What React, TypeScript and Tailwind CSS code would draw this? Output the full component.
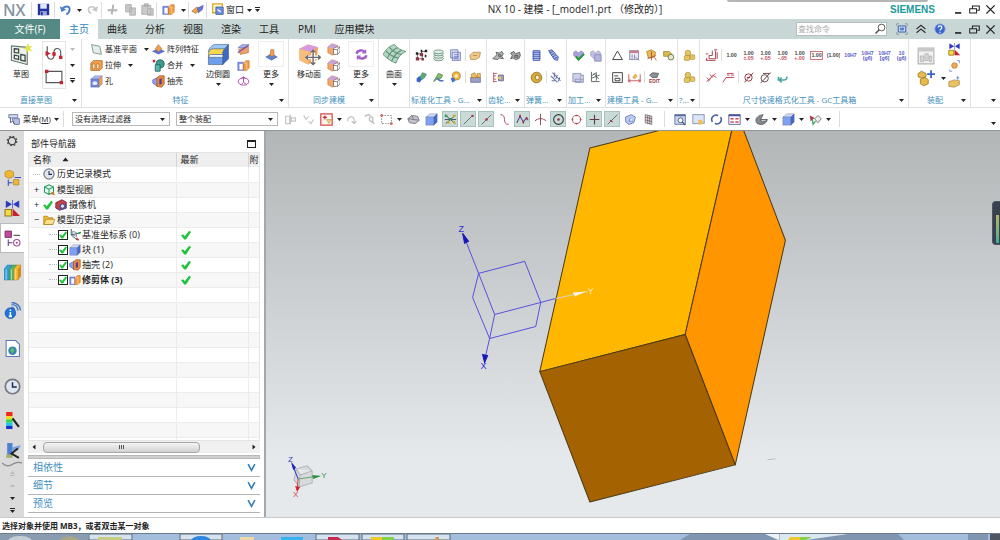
import type { ReactNode } from 'react'
import clsx from 'clsx'

const FONT = "font-['Open_Sans','Noto_Sans_CJK_SC',sans-serif]"

interface CubeProps {
  top: string
  left: string
  right: string
}

function Cube({ top, left, right }: CubeProps) {
  return (
    <g stroke="#555a78" strokeWidth="0.4">
      <path d="M1 5 L6 1 H15 L11 5 Z" fill={top} />
      <path d="M1 5 H11 V15 H1 Z" fill={left} />
      <path d="M11 5 L15 1 V11 L11 15 Z" fill={right} />
    </g>
  )
}

const blueCube = <Cube top="#c9dbfc" left="#7fa0f0" right="#4468cc" />

const heart = (fill: string) => (
  <path d="M8 14 L2 8 V4 L5 2 L8 5 L11 2 L14 4 V8 Z" fill={fill} stroke="#6b6f80" strokeWidth="0.5" />
)

const gold = (
  <g fill="#e6c65c" stroke="#94742a" strokeWidth="0.6">
    <circle cx="6" cy="5" r="3.5" />
    <rect x="1.5" y="8" width="7" height="6" rx="1.5" />
    <rect x="9" y="7" width="5.5" height="6" rx="1.5" />
  </g>
)

const faceCube = (
  <g>
    <path d="M1 5 L6 1 L13 3 L12 12 L7 15 L1 12 Z" fill="#f5a768" stroke="#a8643c" strokeWidth="0.6" />
    <path d="M1 5 L6 1 L13 3 L8 7 Z" fill="#cba4dd" />
    <path d="M8 7 L11 5 H16 V11 L13 14 H8 Z" fill="#fff" stroke="#555" strokeWidth="0.8" />
    <path d="M8 8 H13 V14 M13 8 L16 5" fill="none" stroke="#555" strokeWidth="0.8" />
  </g>
)

const dim = (top: string, bottom?: string, color = '#444') => (
  <g fontFamily="Liberation Sans, sans-serif" fontWeight="700" textAnchor="middle" fill={color}>
    <text x="8" y={bottom ? 7 : 10} fontSize="6.5">
      {top}
    </text>
    {bottom && (
      <text x="8" y="14" fontSize="6.5" fill={color === '#444' ? '#c05060' : color}>
        {bottom}
      </text>
    )}
  </g>
)

const clock = (
  <g>
    <circle cx="8" cy="8" r="6.8" fill="#dfe6f0" stroke="#74797f" strokeWidth="1.6" />
    <path d="M8 4 V8.5 H12" fill="none" stroke="#1b2a48" strokeWidth="1.4" />
  </g>
)

const bars = (
  <g>
    <path d="M1 4 H8 V14 H1 Z" fill="#7b8df0" stroke="#4a50a8" strokeWidth="0.6" />
    <path d="M8 5 L11 2 H15 V11 L12 14 H8 Z" fill="#f59a3c" stroke="#c0601c" strokeWidth="0.6" />
    <path d="M3 6 H7 V13 H3 Z" fill="#fff" />
    <path d="M8 5 H12 V14" fill="none" stroke="#fbd0a0" />
  </g>
)

const icons: Record<string, ReactNode> = {
  save: (
    <g>
      <path d="M1 1 H15 V15 H1 Z" fill="#24349a" />
      <path d="M4 1 H12 V7 H4 Z" fill="#dfe8ff" />
      <path d="M4 10 H12 V15 H4 Z" fill="#9aa8dd" />
      <path d="M5 11 H7 V15 H5 Z" fill="#24349a" />
    </g>
  ),
  undo: (
    <g>
      <path d="M1 4 L3 11 L9 8 Z" fill="#4c7fc6" />
      <path d="M4 8 C6 3 14 3 13 8 C13 11 11 13 9 14" fill="none" stroke="#4c7fc6" strokeWidth="2.4" />
    </g>
  ),
  redo: (
    <g>
      <path d="M15 4 L13 11 L7 8 Z" fill="#c4c8cb" />
      <path d="M12 8 C10 3 3 4 3 8 C3 11 5 12 6 13" fill="none" stroke="#c4c8cb" strokeWidth="2" />
    </g>
  ),
  cut: <path d="M9 2 L7 14 M2 9 H14" fill="none" stroke="#b6b3ae" strokeWidth="2.4" />,
  copy: <path d="M2 2 H9 V11 H2 Z M7 6 H14 V15 H7 Z" fill="#c9c9c9" stroke="#aaa" />,
  paste: <path d="M1 3 H12 V14 H1 Z M4 1 H9 V4 H4 Z M8 7 H15 V15 H8 Z" fill="#c9c9c9" stroke="#aaa" />,
  bars,
  hand: (
    <g>
      <path d="M1 10 L7 5 L11 8 L6 13 Z" fill="#f0a850" stroke="#935c20" strokeWidth="0.7" />
      <path d="M8 6 L15 3 L14 8 L9 12 Z" fill="#6877d4" stroke="#3c4694" strokeWidth="0.7" />
    </g>
  ),
  windowMenu: (
    <g>
      <path d="M2 1 H14 V12 H2 Z" fill="#fff5c8" stroke="#d9aa2a" strokeWidth="1.6" />
      <path d="M6 5 H15 V14 H6 Z" fill="#6f8fdd" stroke="#3858a8" />
      <path d="M8 8 L12 11" stroke="#fff" strokeWidth="1.5" />
    </g>
  ),
  sketch: (
    <g>
      <path d="M1 2 L12 3 V15 L1 12 Z" fill="#edf2ee" stroke="#6a7f75" strokeWidth="0.8" />
      <path
        d="M3 4 L6 4.2 V7 L3 6.6 Z M3 8.5 L6 9 V11.4 L3 10.8 Z M7.5 8 L10.5 8.6 V12.6 L7.5 12 Z"
        fill="none"
        stroke="#404b46"
        strokeWidth="0.9"
      />
      <path d="M12.5 0 L13.3 2.2 L15.8 2 L14 3.7 L15.5 6 L13 5 L11.5 7 L11.3 4.6 L9 4 L11.3 2.8 Z" fill="#dfe84c" />
    </g>
  ),
  spline: (
    <g>
      <path d="M2 1 V8 C2 14 8 14 8 9 V6 C8 2 14 2 14 7 V12" fill="none" stroke="#555" />
      <path d="M1 6 L4 7.5 L1 9 Z M7 7 H9 V9 H7 Z M13 10 H15 V12 H13 Z" fill="#c9202f" stroke="#c9202f" />
    </g>
  ),
  rect: (
    <g>
      <path d="M1 3 H15 V13 H1 Z" fill="none" stroke="#555" />
      <path d="M0.5 2 H2.5 V4 H0.500 Z M13.5 12 H15.5 V14 H13.5 Z" fill="#c9202f" stroke="#c9202f" />
    </g>
  ),
  plane: <path d="M2 2 L12 4 L14 14 L4 12 Z" fill="#e3efe8" stroke="#6e8a7f" />,
  extrude: (
    <g>
      <path d="M1 5 L4 2 H15 V11 L12 14 H1 Z" fill="#f2a04c" stroke="#b0702c" />
      <path d="M3 6 H6 V12 H3 Z M8 6 H11 V12 H8 Z" fill="#fbdcb4" stroke="#99602c" strokeWidth="0.6" />
    </g>
  ),
  hole: (
    <g>
      <Cube top="#a9b8f4" left="#6d84e0" right="#f2a04c" />
      <ellipse cx="6" cy="10" rx="3" ry="2.4" fill="#e8eeff" />
    </g>
  ),
  pattern: (
    <g>
      <path d="M0 10 L8 6 L16 10 L8 14 Z" fill="#5b72d4" />
      <path d="M4 7 L8 2 L12 7 L8 11 Z" fill="#f2a04c" stroke="#99602c" strokeWidth="0.7" />
    </g>
  ),
  unite: (
    <g>
      <circle cx="10" cy="6" r="5" fill="#3f9c92" stroke="#1d5e58" />
      <path d="M4 7 H10 V15 H4 Z" fill="#56b7ab" stroke="#1d5e58" />
      <path d="M1 1 H4 V4 H1 Z" fill="#c9202f" />
    </g>
  ),
  shell: (
    <g>
      <path d="M1 6 L7 3 V14 L1 10 Z" fill="#8ea2ee" stroke="#4a50a8" strokeWidth="0.8" />
      <path d="M6 4 L9 1 H15 V11 L12 15 L6 14 Z" fill="#e98b43" stroke="#8c4a1c" strokeWidth="0.8" />
      <path d="M9 5 L12 4 V11 L9 12 Z" fill="#5d3c8a" />
    </g>
  ),
  blend: (
    <g stroke="#3d5577" strokeWidth="0.4">
      <path d="M1 6 C1 4 3 2 5 1 H15 L11 5 H5 C3 5 2 6 2 7 Z" fill="#9cc8f6" />
      <path d="M1 7 C2 4 4 4 5 4 H12 L11 8 H4 L3 10 H1 Z" fill="#f7d84e" />
      <path d="M1 10 H11 V15 H1 Z" fill="#6f9fec" />
      <path d="M11 6 L15 1 V11 L11 15 Z" fill="#3d68c4" />
      <path d="M2 8 H11 V10 H1 Z" fill="#eef4ff" />
    </g>
  ),
  trim: (
    <g>
      <path d="M1 6 L6 2 H15 L11 6 Z" fill="#a7b2f0" stroke="#4a50a8" strokeWidth="0.6" />
      <path d="M2 8 L14 4 V12 L4 14 Z" fill="#f0a070" stroke="#935c20" strokeWidth="0.6" />
      <path d="M1 12 L14 3" stroke="#7c4ba6" strokeWidth="1.4" />
    </g>
  ),
  ring: (
    <g fill="none" stroke="#b54fae" strokeWidth="1.2">
      <ellipse cx="8" cy="8" rx="6.5" ry="4.5" />
      <path d="M8 2 V9 L5 12 M8 9 L12 12 M5 5 L8 2 L11 5" />
    </g>
  ),
  moreFeature: (
    <g>
      <path d="M1 11 L8 7 L15 11 L8 15 Z" fill="#5b82d8" stroke="#34509a" strokeWidth="0.6" />
      <path d="M7 2 H11 V10 H6 Z" fill="#f2a04c" stroke="#99602c" strokeWidth="0.6" />
    </g>
  ),
  moveFace: (
    <g>
      <path d="M1 4 L7 1 L14 3 L13 12 L7 15 L1 12 Z" fill="#f2a25c" />
      <path d="M1 4 L7 1 L14 3 L8 6 Z" fill="#d49be0" />
      <path d="M1 4 L8 6 L7 15 L1 12 Z" fill="#f7bd7c" />
      <path d="M10.5 5 V15 M5.5 10 H15.5" stroke="#fff" strokeWidth="2.6" />
      <path
        d="M10.5 5 V15 M5.5 10 H15.5 M9 6.5 L10.5 5 L12 6.5 M9 13.5 L10.5 15 L12 13.5 M7 8.5 L5.5 10 L7 11.5 M14 8.5 L15.5 10 L14 11.5"
        fill="none"
        stroke="#6a6a72"
      />
    </g>
  ),
  face: faceCube,
  moreSync: (
    <g fill="none" stroke="#a35bc8" strokeWidth="3">
      <path d="M2 7 C3 2 10 2 12 5" />
      <path d="M14 9 C13 14 6 14 4 11" />
      <path d="M13 2 V6 H9 M3 14 V10 H7" strokeWidth="1.5" />
    </g>
  ),
  surface: (
    <g>
      <path
        d="M0 8 C3 3 5 2 8 1 C10 4 13 5 16 6 C13 7 11 9 9 14 C6 13 3 11 0 8 Z"
        fill="#b3d6c1"
        stroke="#5d8f78"
        strokeWidth="0.6"
      />
      <path
        d="M2 5.5 C5 9 8 10 11 10.500 M4.500 3 C7 6 10 7.5 13 8 M3 10.500 C5 6.500 8 4 10 3.300 M6 12.500 C8 8 10 6 13 5"
        fill="none"
        stroke="#5d8f78"
        strokeWidth="0.7"
      />
    </g>
  ),
  nodes: (
    <g>
      <path d="M3 12 V6 H8 V3 H13 M3 12 H9 V8" fill="none" stroke="#555" />
      <path d="M1 10 H5 V14 H1 Z M6 5 H10 V9 H6 Z M8 11 H11 V14 H8 Z" fill="#8e3340" />
      <path d="M1 4 H4 V7 H1 Z M7 1 H9 V4 H7 Z M12 1 H15 V4 H12 Z M12 7 H14 V10 H12 Z" fill="#222" />
    </g>
  ),
  stack: (
    <g fill="#dfece3" stroke="#58806c" strokeWidth="0.9">
      <ellipse cx="8" cy="12" rx="6" ry="2.4" />
      <ellipse cx="8" cy="9" rx="6" ry="2.4" />
      <ellipse cx="8" cy="6" rx="6" ry="2.4" />
      <ellipse cx="8" cy="3.5" rx="6" ry="2.4" />
    </g>
  ),
  sheets: (
    <path d="M2 1 H11 V11 H2 Z M4 4 H14 V14 H4 Z M6 7 H12 M6 9.5 H12 M6 12 H12" fill="#dfe4fa" stroke="#6873b0" />
  ),
  plate: <path d="M1 8 L5 4 H14 L13 10 L8 13 H2 Z M5 8 H10" fill="#eec98c" stroke="#a67735" strokeWidth="0.8" />,
  screwBlue: (
    <g>
      <path d="M2 9 L6 6 L9 9 L6 14 L2 13 Z" fill="#3d62d0" />
      <path d="M6 8 L9 2 L14 4 L12 8 L8 11 Z" fill="#58b06c" stroke="#286a8c" strokeWidth="0.7" />
    </g>
  ),
  screwGreen: (
    <g>
      <path d="M2 13 L8 3 L13 5 L11 9 L7 9 Z" fill="#89c06c" stroke="#4c7c40" />
      <path d="M6 9 L10 12 L14 12" stroke="#496cc8" strokeWidth="2" fill="none" />
    </g>
  ),
  screwGold: (
    <g>
      <circle cx="9" cy="6" r="5" fill="#f0b640" stroke="#98702a" strokeWidth="0.8" />
      <circle cx="9" cy="6" r="2" fill="#fff3d0" />
      <path d="M2 9 L6 8 L8 12 L4 14 Z" fill="#3d72d0" />
    </g>
  ),
  crate: (
    <g>
      <path d="M2 8 H14 V14 H2 Z" fill="#9ea0c8" stroke="#5c5e88" strokeWidth="0.8" />
      <path d="M3 4 L7 2 L10 8 H3 Z M10 3 H14 V8 H10 Z" fill="#eebd5c" stroke="#98702a" strokeWidth="0.7" />
    </g>
  ),
  gearA: (
    <path
      d="M1 12 L6 7 L5 4 L9 5 L12 3 L14 6 L12 9 L14 12 L9 11 L7 13 Z M8 7 H11 V9 H8 Z"
      fill="#b6b8ba"
      stroke="#4e5254"
    />
  ),
  gearB: (
    <path
      d="M2 5 L6 3 L8 6 L13 4 L14 8 L12 12 L8 13 L5 11 L2 12 L4 8 Z M7 8 H11 V10 H7 Z"
      fill="#a6a8aa"
      stroke="#4e5254"
    />
  ),
  rack: (
    <g>
      <path d="M2 2 V14 M2 3 H6 M2 6 H5 M2 10 H5 M2 13 H6" stroke="#a84850" fill="none" />
      <path d="M8 5 H14 V12 H8 Z" fill="#aaa4c0" stroke="#5c5e88" />
      <path d="M7 7 H11 V10 H7 Z" fill="#e6c05e" />
    </g>
  ),
  springA: (
    <path
      d="M4 2 H12 V14 H4 Z M3 4 H13 M3 6.5 H13 M3 9 H13 M3 11.5 H13"
      fill="#bccaf4"
      stroke="#4a60b4"
      strokeWidth="1.2"
    />
  ),
  springB: (
    <path d="M2 2 L6 1 L14 10 L13 14 L9 13 Z M3 5 L7 3 M5 8 L9 5 M7 10 L11 7 M9 12 L13 10" fill="#9fb0ec" stroke="#3c50a4" />
  ),
  disc: (
    <g>
      <ellipse cx="8" cy="8" rx="6.5" ry="6.5" fill="#d7ad3a" stroke="#8c6d20" />
      <ellipse cx="9" cy="8" rx="2.5" ry="3" fill="#fff1c4" stroke="#8c6d20" />
    </g>
  ),
  springC: (
    <path
      d="M3 2 L13 12 M1 6 L9 14 M6 2 L5 8 M9 5 L7 10 M12 8 L10 13 M2 12 H6"
      fill="none"
      stroke="#6a74a4"
      strokeWidth="1.3"
    />
  ),
  heartCheck: (
    <g>
      {heart('#a69fe0')}
      <path d="M5 9 L8 13 L15 6" fill="none" stroke="#1e9a34" strokeWidth="2.4" />
    </g>
  ),
  heartDoc: (
    <g>
      {heart('#c3bfe8')}
      <path d="M7 7 H15 V15 H7 Z" fill="#b4b4e0" stroke="#7a7aac" strokeWidth="0.8" />
    </g>
  ),
  panelDoc: (
    <path d="M1 3 H11 V13 H1 Z M4 10 H14 V14 H4 Z M11 5 H14 V10" fill="#cdd0e8" stroke="#8286ac" strokeWidth="0.9" />
  ),
  axes: (
    <path
      d="M3 1 V13 H13 M3 6 L9 2 M9 2 V12 M3 9 L13 5 M6 3 L12 10"
      fill="none"
      stroke="#55605c"
      strokeWidth="1.1"
    />
  ),
  triangle: <path d="M8 2.5 L14 13 H2 Z" fill="none" stroke="#444" strokeWidth="1.2" />,
  listRed: (
    <g>
      <path d="M2 2 H13 V13 H2 Z" fill="#e9e9f6" stroke="#7b7ba0" />
      <path d="M2 2 H13 V5 H2 Z" fill="#c98093" />
      <path d="M5 7 V12 M8 7 V12 M9 10 L14 14" stroke="#7b7ba0" />
    </g>
  ),
  goldAxes: (
    <g>
      <path d="M2 3 L8 1 L13 4 L12 10 L4 11 Z" fill="#e9bb4c" stroke="#9d762c" strokeWidth="0.8" />
      <path d="M3 12 L13 8 M8 3 V14 M12 11 L14 14" stroke="#b2443c" />
    </g>
  ),
  goldGear: (
    <g>
      <path d="M2 3 H9 L12 6 L9 9 H2 Z" fill="#d6bc4c" stroke="#8c742c" strokeWidth="0.8" />
      <circle cx="11" cy="10" r="3.5" fill="#e6e6cc" stroke="#5e6e3c" />
    </g>
  ),
  frame: <path d="M2 2 H14 V14 H2 Z M5 9 H11 V12 H5 Z M4 6 H9" fill="none" stroke="#444" strokeWidth="1.2" />,
  measure: (
    <g>
      <path
        d="M1 4 V14 M15 4 V14 M1 12 H15 M3 10 L1 12 L3 14 M13 10 L15 12 L13 14"
        fill="none"
        stroke="#c24040"
      />
      <path d="M5 8 L9 3 L12 6 L8 10 Z" fill="#e7b25a" />
    </g>
  ),
  edit: (
    <g>
      <path d="M2 5 L6 2 L13 3 L11 8 L5 8 Z" fill="#8a9296" stroke="#3c4244" strokeWidth="0.8" />
      <text
        x="8"
        y="15"
        fontSize="6"
        fontWeight="700"
        textAnchor="middle"
        fill="#a03c3c"
        fontFamily="Liberation Sans, sans-serif"
      >
        EDIT
      </text>
    </g>
  ),
  gold,
  dimBox: (
    <path
      d="M2 11 V14 M13 2 V12 H5 M5 12 V8 H9 V2 M1 6 H4 M11 1 H15 M1 14 H13 M15 4 V12"
      fill="none"
      stroke="#a84450"
      strokeWidth="1.2"
    />
  ),
  d1: dim('1.00'),
  d2: dim('1.00', '±.05'),
  d3: dim('1.00', '+.05'),
  d4: dim('1.00', '-.05'),
  d5: dim('1.00', '+.00'),
  d6: (
    <g>
      <path d="M0.5 3 H15.5 V13 H0.5 Z" fill="none" stroke="#c04854" />
      {dim('1.00')}
    </g>
  ),
  d7: dim('(1.00)'),
  d8: dim('10H7', undefined, '#5a58c8'),
  d9: dim('10H7', '(g6)', '#5a58c8'),
  d10: dim('10H7', '[g6]', '#5a58c8'),
  d11: dim('10', '(g6)', '#5a58c8'),
  slant: (
    <path
      d="M2 13 L13 3 M2 8 L5 11 M6 4 L9 8 M9 5 L14 8 M4 13 L7 9"
      fill="none"
      stroke="#c04c58"
      strokeWidth="1.2"
    />
  ),
  leader: (
    <path d="M1 14 L5 8 H15 M6 5 H9 M11 5 H15 M6 3 H14" fill="none" stroke="#c04c58" strokeWidth="1.2" />
  ),
  dia1: (
    <g fill="none" stroke="#9c3a44" strokeWidth="1.2">
      <circle cx="8" cy="8" r="4.5" />
      <path d="M3 14 L14 2 M6 8 H10" />
    </g>
  ),
  dia2: (
    <g fill="none" stroke="#6a4a4e" strokeWidth="1.2">
      <circle cx="7" cy="9" r="4.5" />
      <path d="M2 15 L14 2 M5 3 H14" />
    </g>
  ),
  swirl: <path d="M3 7 V11 H10 C13 11 14 9 13 7 M7 8 L4 11 L7 14" fill="none" stroke="#4aa4a4" strokeWidth="2" />,
  assembly: (
    <g>
      <path d="M1 1 H15 V15 H1 Z" fill="#f2f2f2" stroke="#b2b2b2" />
      <path d="M1 1 H15 V4 H1 Z" fill="#c8c8c8" />
      <path
        d="M3 8 H6 V13 H3 Z M7 6 H10 V12 H7 Z M11 8 H13 V13 H11 Z"
        fill="#d6d6d6"
        stroke="#aaa"
        strokeWidth="0.6"
      />
    </g>
  ),
  addPart: (
    <g>
      <path
        d="M1 4 L4 2 L8 4 V7 L4 8 L1 7 Z M3 9 L7 7.5 L10 9.5 V13 L6 15 L3 13 Z"
        fill="#e7ba4c"
        stroke="#98742a"
        strokeWidth="0.7"
      />
      <path d="M12.5 1 V8 M9 4.5 H16" stroke="#3a66c8" strokeWidth="1.6" />
    </g>
  ),
  constraint: (
    <g>
      <path d="M2 1 L7 4 L2 7 Z M14 1 L9 4 L14 7 Z M8 0 V8" fill="#2836c0" stroke="#2836c0" strokeWidth="0.6" />
      <path d="M1 9 H7 V15 H1 Z" fill="#f4dc44" stroke="#8c7a1c" />
      <path d="M8 8 L15 15 H8 Z" fill="#c8202c" />
    </g>
  ),
  moveComp: (
    <g>
      <circle cx="8" cy="8" r="3.5" fill="#f0a850" stroke="#a86820" strokeWidth="0.7" />
      <path d="M2 13 V15 H5 M11 2 H14 V5" fill="none" stroke="#5f84cc" />
    </g>
  ),
  partTag: (
    <g>
      <path d="M1 8 L8 6 L14 7 V12 L8 15 L1 14 Z" fill="#ecc163" stroke="#98742a" strokeWidth="0.7" />
      <path d="M12 1 V6 M10 3.5 H14" stroke="#5f84cc" />
    </g>
  ),
  menu: (
    <g>
      <path d="M1 2 H12 V6 H1 Z" fill="#d4dcf0" stroke="#5c6c98" />
      <path d="M5 7 H14 V14 H8 Z" fill="#b8c2e4" stroke="#5c6c98" />
      <path d="M3 6 V12 L6 10 L8 14" fill="none" stroke="#444c68" />
    </g>
  ),
  greyA: <path d="M2 4 H7 V13 H2 Z M9 6 H14 V10 H9 Z M8 2 V14" fill="none" stroke="#c6c6c6" strokeWidth="1.5" />,
  greyB: <path d="M2 3 L5 8 L8 4 M8 10 L11 13 L14 8" fill="none" stroke="#c6c6c6" strokeWidth="1.5" />,
  filter: (
    <g>
      <path d="M1 1 H15 V15 H1 Z" fill="#fdf4f2" stroke="#d84848" strokeWidth="1.5" />
      <path d="M6 3 V8 M3.5 5.5 H8.5" stroke="#c03030" strokeWidth="1.5" />
      <path d="M8 8 H14 L11 13 Z" fill="#ead37a" stroke="#a8882c" strokeWidth="0.6" />
    </g>
  ),
  greyC: (
    <path d="M2 10 C2 4 9 3 10 8 V13 M7 10 L10 13 L13 10" fill="none" stroke="#c2c2c2" strokeWidth="1.5" />
  ),
  greyD: <path d="M2 4 L7 2 L12 6 V12 M8 5 V9 L14 13" fill="none" stroke="#c2c2c2" strokeWidth="1.8" />,
  marquee: (
    <g fill="none">
      <path d="M2 3 H14 V13 H2 Z" stroke="#777" strokeDasharray="2 1.5" />
      <path d="M1 2 H3 V4 H1 Z M13 12 H15 V14 H13 Z" stroke="#c84848" />
    </g>
  ),
  solid: (
    <path
      d="M1 7 L6 3 L13 4 L15 9 L10 13 L3 12 Z M1 7 L8 8 L15 9 M8 8 L6 3"
      fill="#c2c4ca"
      stroke="#6c6e7c"
    />
  ),
  cube: blueCube,
  snapAll: (
    <g>
      <path d="M2 3 L14 13 M2 13 L14 3 M1 8 H15" stroke="#335" />
      <path d="M1 2 H4 V5 H1 Z M7 6 H10 V9 H7 Z" fill="#2a9a44" />
      <path d="M11 2 H14 V5 H11 Z M4 10 H7 V13 H4 Z M11 10 H14 V13 H11 Z" fill="#c8b020" />
    </g>
  ),
  endPoint: (
    <g>
      <path d="M2 14 L13 3" stroke="#4c5a5e" />
      <circle cx="13" cy="3.5" r="1.5" fill="#b03040" />
    </g>
  ),
  midPoint: (
    <g>
      <path d="M2 14 L14 2" stroke="#4c5a5e" />
      <circle cx="8" cy="8" r="1.6" fill="#b03040" />
    </g>
  ),
  curve: <path d="M3 2 C12 2 4 14 13 14" fill="none" stroke="#a84c58" strokeWidth="1.2" />,
  pole: (
    <g>
      <path d="M1 12 L5 4 L9 11 L13 6 L15 9" fill="none" stroke="#54408c" strokeWidth="1.3" />
      <path d="M4 2 H6 V5 H4 Z M8 10 H10 V13 H8 Z M12 5 H14 V8 H12 Z" fill="#b03040" />
    </g>
  ),
  cross: <path d="M8 1 V15 M1 10 C4 6 12 6 15 10" fill="none" stroke="#8c5058" strokeWidth="1.2" />,
  center: (
    <g>
      <circle cx="8" cy="8" r="6" fill="none" stroke="#303a3c" strokeWidth="1.3" />
      <circle cx="8" cy="8" r="1.6" fill="#a03040" />
    </g>
  ),
  quadrant: (
    <g>
      <circle cx="8" cy="8" r="5" fill="none" stroke="#a05058" strokeWidth="1.1" />
      <path d="M7 2 H9 V4 H7 Z M7 12 H9 V14 H7 Z M2 7 H4 V9 H2 Z M12 7 H14 V9 H12 Z" fill="#c84848" />
    </g>
  ),
  plus: <path d="M8 2 V14 M2 8 H14" stroke="#5c3c44" strokeWidth="1.4" />,
  onCurve: (
    <g>
      <path d="M2 14 L14 2" stroke="#4c5a5e" />
      <path d="M5 9 L8 11" stroke="#b03040" strokeWidth="1.5" />
    </g>
  ),
  onFace: <path d="M2 5 L9 2 L14 5 L12 12 L6 14 L2 11 Z M8 6 L6 10 H11" fill="#bccbf2" stroke="#5a70b4" />,
  grid: (
    <path
      d="M4 2 L12 4 V14 L4 12 Z M4 5 L12 7 M4 8.5 L12 10.5 M7 3 V13 M9.5 3.5 V13.5"
      fill="#f0eaea"
      stroke="#6c5c60"
    />
  ),
  fit: (
    <g>
      <path d="M1 2 H14 V14 H1 Z" fill="#c8d4f0" stroke="#5c6c98" />
      <path d="M1 2 H14 V4 H1 Z" fill="#5c6c98" />
      <circle cx="8" cy="9" r="3" fill="#fff" stroke="#44506c" />
      <path d="M10 11 L14 15" stroke="#44506c" strokeWidth="1.5" />
    </g>
  ),
  zoomWin: (
    <g>
      <path d="M1 2 H15 V13 H1 Z" fill="#dde6f8" stroke="#7484ac" />
      <path d="M7 9 L12 8 L14 13 L9 15 Z" fill="#eec05c" />
    </g>
  ),
  rotate: (
    <g fill="none" stroke="#4458a4" strokeWidth="1.9">
      <path d="M3 11 C0 6 5 1 10 3" />
      <path d="M13 5 C16 10 11 15 6 13" />
    </g>
  ),
  redGrid: (
    <g>
      <path d="M1 2 H15 V14 H1 Z" fill="#fff" stroke="#44509c" />
      <path d="M1 2 H15 V4 H1 Z" fill="#44509c" />
      <path d="M3 6 H7 V8 H3 Z M9 6 H13 V8 H9 Z M3 10 H7 V12 H3 Z M9 10 H13 V12 H9 Z" fill="#cc4858" />
    </g>
  ),
  shade: (
    <g stroke="#4c5054" strokeWidth="0.8">
      <path d="M1 9 C1 5 6 2 10 2 L7 8 H15 C15 12 10 15 6 14 C3 14 1 12 1 9 Z" fill="#85898e" />
      <path d="M7 8 H15 C14 10 11 11 8 11 Z" fill="#c8ccd0" />
    </g>
  ),
  flags: (
    <g>
      <path d="M1 3 L7 6 L2 10 Z" fill="#b03040" />
      <path d="M4 7 L5 14 L8 10" fill="none" stroke="#3aa05c" strokeWidth="1.5" />
      <path d="M11 3 L15 7 L11 12 L7 7 Z" fill="#eee" stroke="#666" />
    </g>
  ),
  gear: (
    <g>
      <circle cx="8" cy="8" r="6.3" fill="none" stroke="#444" strokeWidth="1.6" strokeDasharray="2.4 2.55" />
      <circle cx="8" cy="8" r="4.9" fill="none" stroke="#444" strokeWidth="1.6" />
    </g>
  ),
  asmNav: (
    <g>
      <path
        d="M1 2 L5 0 L9 2 V6 L5 8 L1 6 Z M9 9 H14 V14 H9 Z"
        fill="#f0b830"
        stroke="#a87c1c"
        strokeWidth="0.6"
      />
      <path d="M4 9 V15 M4 12 H8 M10 7 H16" stroke="#3a50b8" fill="none" />
    </g>
  ),
  partNav: (
    <g>
      <path d="M1 1 H7 V7 H1 Z" fill="#c04aa0" stroke="#742460" strokeWidth="0.8" />
      <path d="M9 5 H15" stroke="#444" />
      <path d="M4 9 V15 M4 12 H8" stroke="#5c4090" fill="none" />
      <circle cx="12" cy="12" r="3" fill="#fff" stroke="#a04a98" />
      <circle cx="12" cy="12" r="1" fill="#a04a98" />
    </g>
  ),
  books: (
    <g>
      <path d="M0 5 L3 1 H8 L5 5 V15 H0 Z" fill="#38a0d8" stroke="#1a6090" strokeWidth="0.4" />
      <path d="M5 5 L8 1 H12 L9 5 V15 H5 Z" fill="#4cb868" stroke="#207038" strokeWidth="0.4" />
      <path d="M9 5 L12 1 H16 V11 L13 15 H9 Z" fill="#f0b830" stroke="#a86010" strokeWidth="0.4" />
      <path d="M13 5 L16 1 V11 L13 15 Z" fill="#d88a20" />
      <path d="M2 5 V15 M7 5 V15 M11 5 V15" stroke="#fff" strokeOpacity="0.6" strokeWidth="0.8" />
    </g>
  ),
  info: (
    <g>
      <path
        d="M7 5 C9 5 10 7 10 8 M7 2.5 C11 2.5 13 5 13 8 M7 0.500 C13 0.500 15.500 5 15.500 8"
        fill="none"
        stroke="#4478c0"
        strokeWidth="1.3"
      />
      <circle cx="6" cy="10.5" r="5" fill="#1e74d8" stroke="#104898" strokeWidth="0.6" />
      <path d="M6 7 V8.5 M6 9.5 V13.5 M4.5 13.5 H7.5" stroke="#fff" strokeWidth="1.5" />
    </g>
  ),
  page: (
    <g>
      <path d="M2 0.5 H11 L14.5 4 V15.5 H2 Z" fill="#fff" stroke="#5c78b8" />
      <circle cx="8" cy="10" r="4" fill="#3c84b8" />
      <path d="M7 7 L10 9 L8 13 L6 10 Z" fill="#5cc060" />
    </g>
  ),
  clock,
  rainbow: (
    <g>
      <path d="M2 0 H8 V4 H2 Z" fill="#f02818" />
      <path d="M2 4 H8 V7 H2 Z" fill="#f8e020" />
      <path d="M2 7 H8 V10 H2 Z" fill="#30d840" />
      <path d="M2 10 H8 V13 H2 Z" fill="#20c8e8" />
      <path d="M2 13 H8 V16 H2 Z" fill="#1830d0" />
      <path d="M8 6 L14 14" stroke="#222" strokeWidth="2" />
    </g>
  ),
  wizard: (
    <g>
      <path d="M3 1 H8 V12 H3 Z" fill="#4c80d0" />
      <path d="M8 5 L16 3 L13 8 H8 Z" fill="#7ca0dc" />
      <path d="M2 12 H8 V15 H2 Z" fill="#a8b06c" />
      <path d="M13 6 L7 11 L14 15" fill="none" stroke="#222" strokeWidth="1.8" />
    </g>
  ),
  viewCube: (
    <g>
      <path
        d="M2 4 L8 1 L14 4 V11 L8 14 L2 11 Z M2 4 L8 7 L14 4 M8 7 V14"
        fill="#e8fbf0"
        stroke="#1f9c5c"
        strokeWidth="1.4"
      />
      <path d="M9 13 L14 10 L16 15 Z" fill="#c87838" />
    </g>
  ),
  camera: (
    <g>
      <path d="M1 5 L9 1 L15 4 V12 L6 15 L1 12 Z" fill="#c84048" stroke="#58204c" />
      <path d="M6 7 H15 V13 L6 15 Z" fill="#5c4c98" />
      <circle cx="10" cy="9.5" r="2.8" fill="#dfe4f4" stroke="#303870" />
    </g>
  ),
  folder: (
    <g>
      <path d="M1 3 H6 L8 5 H13 V14 H1 Z" fill="#f0b830" stroke="#a87814" strokeWidth="0.9" />
      <path d="M4 7 H16 L13 14 H1 Z" fill="#fce08c" stroke="#a87814" strokeWidth="0.9" />
    </g>
  ),
  csys: (
    <g>
      <path d="M3 0 V8 L15 5 M3 8 L11 15" fill="none" stroke="#34644c" strokeWidth="1.3" />
      <path d="M5 3 L10 5 V10 L5 8 Z" fill="none" stroke="#6868b0" />
      <path d="M10 12 L13 15" stroke="#c03030" strokeWidth="2" />
      <path d="M12 6 L16 4.500" stroke="#2c9c44" strokeWidth="2" />
    </g>
  ),
  check: <path d="M0 8 L4 7 L6 10 L13 1 L16 3 L8 15 H5 Z" fill="#22c23e" />,
  help: (
    <g>
      <circle cx="8" cy="8" r="7" fill="#3a66cc" stroke="#9cb4e8" />
      <path
        d="M5.5 6 C5.5 3 10.5 3 10.5 6 C10.5 8 8 8 8 10 M8 11.5 V13"
        fill="none"
        stroke="#fff"
        strokeWidth="1.6"
      />
    </g>
  ),
  search: (
    <g fill="none" stroke="#555">
      <circle cx="10" cy="6" r="4.5" strokeWidth="1.3" />
      <path d="M7 9 L2 14" strokeWidth="2.2" />
    </g>
  ),
  fullscreen: (
    <g>
      <path d="M1 4 V1 H4 M12 1 H15 V4 M15 12 V15 H12 M4 15 H1 V12" fill="none" stroke="#7c8c98" />
      <path d="M3 4 H13 V12 H3 Z" fill="#dce8fc" stroke="#3458a0" strokeWidth="1.3" />
      <path d="M5 6 H11 V10 H5 Z" fill="#5c84cc" />
    </g>
  ),
  collapse: <path d="M2 8 L8 3 L14 8 M2 13 L8 8 L14 13" fill="none" stroke="#333" strokeWidth="1.6" />,
  minimize: <path d="M3 13 H12" stroke="#222" strokeWidth="2.4" />,
  restore: <path d="M5 7 V3 H15 V9 H12 M1 7 H11 V13 H1 Z" fill="none" stroke="#222" strokeWidth="1.5" />,
  close: <path d="M2 2 L14 14 M14 2 L2 14" stroke="#222" strokeWidth="2" />,
  chevron: <path d="M2 2 L8 13 L14 2" fill="none" stroke="#2f7fb5" strokeWidth="2.8" />,
}

function Icon({ name, className = 'size-[13px]' }: { name: string; className?: string }) {
  return (
    <svg viewBox="0 0 16 16" className={clsx('shrink-0', className)} aria-hidden="true">
      {icons[name]}
    </svg>
  )
}

function Caret({ bar = false, className }: { bar?: boolean; className?: string }) {
  return (
    <svg viewBox="0 0 5 6" className={clsx('h-[6px] w-[5px] shrink-0', className)} aria-hidden="true">
      {bar && <path d="M0 0.5 H5" stroke="currentColor" />}
      <path d="M0 2 H5 L2.5 5 Z" fill="currentColor" />
    </svg>
  )
}

function Tool({ name, on = false, className = 'w-[17px]' }: { name: string; on?: boolean; className?: string }) {
  return (
    <button
      type="button"
      aria-label={name}
      className={clsx(
        'flex h-4 shrink-0 items-center justify-center',
        on && 'border border-[#a9c2be] bg-[#c9dad7]',
        className,
      )}
    >
      <Icon name={name} />
    </button>
  )
}

function CaretButton({ className = 'w-[9px]' }: { className?: string }) {
  return (
    <button type="button" aria-label="展开" className={clsx('flex h-4 shrink-0 items-center justify-center', className)}>
      <Caret />
    </button>
  )
}

function Sep({ className = 'h-4' }: { className?: string }) {
  return <div className={clsx('w-px shrink-0 bg-[#dcdcdc]', className)} />
}

interface BigToolProps {
  name: string
  label: string
  boxed?: boolean
  caret?: boolean
}

function BigTool({ name, label, boxed = false, caret = true }: BigToolProps) {
  return (
    <button type="button" className="flex shrink-0 flex-col items-center">
      <span className={clsx('flex h-[26px] w-[26px] items-center justify-center', boxed && 'border border-[#eee]')}>
        <Icon name={name} className={boxed ? 'size-[13px]' : 'size-[23px]'} />
      </span>
      <span className="leading-[14px]">{label}</span>
      {caret && <Caret />}
    </button>
  )
}

function TextTool({ name, label, caret = false }: { name: string; label: string; caret?: boolean }) {
  return (
    <button type="button" className="flex h-4 items-center gap-[2px] whitespace-nowrap">
      <Icon name={name} />
      <span>{label}</span>
      {caret && <Caret className="ml-[5px]" />}
    </button>
  )
}

interface GroupProps {
  label: string
  className: string
  left?: boolean
  children?: ReactNode
}

function Group({ label, className, left = false, children }: GroupProps) {
  return (
    <section className={clsx('flex flex-col border-r border-[#e2e2e2]', className)}>
      <div className="flex flex-1 items-start pt-[2px]">{children}</div>
      <div className="flex h-[15px] items-center pr-1 text-[#3f8fba]">
        <span className={clsx('flex-1 whitespace-nowrap', left ? 'pl-px' : 'text-center')}>{label}</span>
        <Caret className="text-[#222]" />
      </div>
    </section>
  )
}

// '|' draws a thin divider between two tools
function ToolRows({ rows }: { rows: string[][] }) {
  return (
    <div className="flex flex-col gap-[6px] pl-[3px] pt-[6px]">
      {rows.map((row, i) => (
        <div key={i} className="flex items-center">
          {row.map((name, j) => (name === '|' ? <Sep key={j} className="mx-px h-3" /> : <Tool key={j} name={name} />))}
        </div>
      ))}
    </div>
  )
}

function TitleBar() {
  return (
    <header className="relative flex h-[19px] shrink-0 items-center bg-white">
      <span className="w-[31px] pl-[3px] font-['Open_Sans',sans-serif] text-[16px] font-semibold leading-none text-[#8496a2]">
        NX
      </span>
      <Sep />
      <Tool name="save" className="w-[22px]" />
      <Sep />
      <Tool name="undo" className="w-[20px]" />
      <CaretButton />
      <Tool name="redo" />
      <Sep />
      <Tool name="cut" className="w-[20px]" />
      <Tool name="copy" />
      <Tool name="paste" />
      <Sep />
      <Tool name="bars" className="w-[22px]" />
      <CaretButton />
      <Sep />
      <Tool name="hand" />
      <Sep />
      <button type="button" className="flex items-center gap-[2px] pl-1 text-[9px]">
        <Icon name="windowMenu" />
        <span>窗口</span>
        <Caret className="mx-[1px]" />
        <Caret bar />
      </button>
      <h1 className="flex-1 text-center text-[10px]">NX 10 - 建模 - [_model1.prt （修改的）]</h1>
      <span className="font-['Liberation_Sans',sans-serif] text-[10px] font-bold text-[#1a9a9a]">SIEMENS</span>
      <div className="ml-[18px] flex items-center gap-[5px] pr-[4px]">
        {['minimize', 'restore', 'close'].map((name) => (
          <button key={name} type="button" aria-label={name}>
            <Icon name={name} className="size-[11px]" />
          </button>
        ))}
      </div>
      <div className="absolute right-[72px] top-0 h-[2px] w-[201px] rounded-b bg-[#b5b5b5]" />
    </header>
  )
}

const tabs = ['主页', '曲线', '分析', '视图', '渲染', '工具', 'PMI', '应用模块']

function TabBar() {
  return (
    <nav className="flex h-5 shrink-0 items-center bg-[#c8d7d5] text-[10px]">
      <button type="button" className="h-full w-[60px] bg-[#548a83] text-white">
        文件(F)
      </button>
      {tabs.map((tab) => (
        <button
          key={tab}
          type="button"
          className={clsx(
            'h-full whitespace-nowrap',
            tab === '应用模块' ? 'w-[57px]' : 'w-[38px]',
            tab === '主页' && 'bg-white text-[#2f86b8]',
          )}
        >
          {tab}
        </button>
      ))}
      <div className="ml-auto flex items-center gap-[7px] pr-[4px]">
        <div className="mr-[2px] flex h-[14px] w-[91px] items-center border border-[#b4c0be] bg-white">
          <input
            aria-label="查找命令"
            placeholder="查找命令"
            className="min-w-0 flex-1 pl-px text-[8px] outline-none placeholder:text-[#aaa]"
          />
          <Icon name="search" className="size-3" />
        </div>
        {['fullscreen', 'collapse', 'help'].map((name) => (
          <button key={name} type="button" aria-label={name}>
            <Icon name={name} className="size-3" />
          </button>
        ))}
        <div className="flex gap-[5px]">
          {['minimize', 'restore', 'close'].map((name) => (
            <button key={name} type="button" aria-label={name}>
              <Icon name={name} className="size-[11px]" />
            </button>
          ))}
        </div>
      </div>
    </nav>
  )
}

function Ribbon() {
  return (
    <div className="flex h-[69px] shrink-0 border-b border-[#dedede] bg-white text-[8px]">
      <Group label="直接草图" className="w-[82px]">
        <div className="pl-2">
          <BigTool name="sketch" label="草图" caret={false} />
        </div>
        <div className="ml-2 flex h-[48px] flex-col items-center justify-around border border-[#e4e4e4] px-[2px]">
          <Icon name="spline" className="size-[18px]" />
          <Icon name="rect" className="size-[18px]" />
        </div>
        <div className="flex h-[48px] flex-col items-center justify-around pl-1">
          <Caret className="text-[#bbb]" />
          <Caret />
          <Caret bar />
        </div>
      </Group>
      <Group label="特征" className="w-[207px]">
        <div className="w-[62px] pl-2">
          <TextTool name="plane" label="基准平面" caret />
          <TextTool name="extrude" label="拉伸" caret />
          <TextTool name="hole" label="孔" />
        </div>
        <div className="w-[61px] pl-2">
          <TextTool name="pattern" label="阵列特征" />
          <TextTool name="unite" label="合并" caret />
          <TextTool name="shell" label="抽壳" />
        </div>
        <BigTool name="blend" label="边倒圆" />
        <div className="pl-[4px] pr-[6px]">
          <Tool name="trim" />
          <Tool name="bars" />
          <Tool name="ring" />
        </div>
        <BigTool name="moreFeature" label="更多" boxed />
      </Group>
      <Group label="同步建模" className="w-[90px]">
        <div className="pl-[7px]">
          <BigTool name="moveFace" label="移动面" caret={false} />
        </div>
        <div className="pl-[3px] pr-[6px]">
          <Tool name="face" />
          <Tool name="face" />
          <Tool name="face" />
        </div>
        <BigTool name="moreSync" label="更多" boxed />
      </Group>
      <section className="w-[31px] border-r border-[#e2e2e2] pl-[2px] pt-[2px]">
        <BigTool name="surface" label="曲面" />
      </section>
      <Group label="标准化工具 - G..." className="w-[77px]" left>
        <ToolRows
          rows={[
            ['nodes', 'stack', 'sheets', '|', 'plate'],
            ['screwBlue', 'screwGreen', 'screwGold', '|', 'crate'],
          ]}
        />
      </Group>
      <Group label="齿轮..." className="w-[38px]" left>
        <ToolRows rows={[['gearA', 'gearB'], ['rack']]} />
      </Group>
      <Group label="弹簧..." className="w-[42px]" left>
        <ToolRows rows={[['springA', 'springB'], ['disc', '|', 'springC']]} />
      </Group>
      <Group label="加工..." className="w-[39px]" left>
        <ToolRows rows={[['heartCheck', 'heartDoc'], ['panelDoc', 'axes']]} />
      </Group>
      <Group label="建模工具 - G..." className="w-[72px]" left>
        <ToolRows rows={[['triangle', 'listRed', 'goldAxes', 'goldGear'], ['frame', 'measure', '|', 'edit']]} />
      </Group>
      <Group label="?..." className="w-[22px]" left>
        <ToolRows rows={[['gold'], ['gold']]} />
      </Group>
      <Group label="尺寸快速格式化工具 - GC工具箱" className="w-[209px]">
        <ToolRows
          rows={[
            ['dimBox', '|', 'd1', 'd2', 'd3', 'd4', 'd5', 'd6', 'd7', 'd8', 'd9', 'd10', 'd11'],
            ['slant', 'leader', '|', 'dia1', 'dia2', 'swirl'],
          ].map((row) => row)}
        />
      </Group>
      <Group label="装配" className="w-[62px]">
        <div className="flex flex-col gap-1 pl-2 pt-[6px]">
          <Icon name="assembly" className="size-[18px]" />
          <div className="flex items-center gap-[6px]">
            <Icon name="addPart" className="size-[18px]" />
            <Caret />
          </div>
        </div>
        <div>
          <Tool name="constraint" />
          <Tool name="moveComp" />
          <Tool name="partTag" />
        </div>
      </Group>
      <div className="flex flex-1 items-end justify-end pb-1 pr-1">
        <Caret />
      </div>
    </div>
  )
}

const snapTools: [string, boolean][] = [
  ['snapAll', true],
  ['endPoint', true],
  ['midPoint', true],
  ['curve', false],
  ['pole', true],
  ['cross', false],
  ['center', true],
  ['quadrant', false],
  ['plus', true],
  ['onCurve', true],
  ['onFace', false],
  ['grid', false],
]

function FilterSelect({ label, className }: { label: string; className: string }) {
  return (
    <div className={clsx('relative h-[14px] shrink-0 border border-[#b9b9b9]', className)}>
      <select
        aria-label={label}
        className="block h-full w-full appearance-none bg-white px-[2px] text-[8px] leading-[12px]"
      >
        <option>{label}</option>
      </select>
      <Caret className="pointer-events-none absolute right-1 top-[3px]" />
    </div>
  )
}

function SelectionBar() {
  return (
    <div className="flex h-[23px] shrink-0 items-center border-b border-[#8f9597] bg-white text-[8px]">
      <button type="button" className="flex w-[63px] items-center gap-[2px] pl-2">
        <Icon name="menu" />
        <span>
          菜单(<u>M</u>)
        </span>
        <Caret className="ml-[1px]" />
      </button>
      <Sep />
      <FilterSelect label="没有选择过滤器" className="ml-2 w-[98px]" />
      <FilterSelect label="整个装配" className="ml-[6px] w-[102px]" />
      <div className="ml-1 flex items-center">
        <Tool name="greyA" />
        <Tool name="greyB" className="w-[18px]" />
        <Tool name="filter" className="w-[18px]" />
        <CaretButton />
        <Tool name="greyC" />
        <Tool name="greyD" />
        <Tool name="marquee" />
        <CaretButton />
        <Tool name="solid" className="w-[18px]" />
        <Tool name="cube" className="w-[18px]" />
      </div>
      <div className="flex items-center gap-[2px] px-[2px]">
        {snapTools.map(([name, on]) => (
          <Tool key={name} name={name} on={on} className="w-4" />
        ))}
      </div>
      <Sep className="mx-[6px] h-4" />
      <Tool name="fit" className="w-[18px]" />
      <Tool name="zoomWin" className="w-[18px]" />
      <Tool name="rotate" className="w-[18px]" />
      <Tool name="redGrid" className="w-[18px]" />
      <CaretButton />
      <Tool name="shade" className="w-[18px]" />
      <CaretButton />
      <Tool name="cube" className="w-[18px]" />
      <CaretButton />
      <Tool name="flags" className="w-[18px]" />
      <CaretButton />
      <Sep className="ml-[6px] h-4" />
      <Caret className="ml-auto mr-1 mt-2" />
    </div>
  )
}

const resources = [
  { name: 'asmNav', height: 'h-[30px]' },
  { name: 'constraint', height: 'h-[30px]' },
  { name: 'partNav', height: 'h-[30px]', active: true },
  { name: 'books', height: 'h-[38px]' },
  { name: 'info', height: 'h-[38px]' },
  { name: 'page', height: 'h-[38px]' },
  { name: 'clock', height: 'h-[38px]' },
  { name: 'rainbow', height: 'h-[30px]' },
  { name: 'wizard', height: 'h-[30px]' },
]

function ResourceBar() {
  return (
    <aside className="flex w-6 shrink-0 flex-col items-center bg-[#dadada]">
      <button type="button" aria-label="gear" className="mb-3 flex h-5 items-center">
        <Icon name="gear" className="size-3" />
      </button>
      {resources.map(({ name, height, active }) => (
        <button
          key={name}
          type="button"
          aria-label={name}
          className={clsx(
            'flex w-full shrink-0 items-center justify-center',
            height,
            active && 'border border-r-0 border-[#bbb] bg-white',
          )}
        >
          <Icon name={name} className="size-[17px]" />
        </button>
      ))}
      <svg viewBox="0 0 20 6" className="-mt-1 h-[6px] w-5 shrink-0" aria-hidden="true">
        <path d="M0 2 C4 6 8 5 11 3 C14 1 17 1 20 2" fill="none" stroke="#888" strokeWidth="1.2" />
      </svg>
      <div className="flex flex-1 flex-col items-center justify-around">
        <Caret bar className="rotate-180 text-[#bbb]" />
        <Caret className="rotate-180 text-[#bbb]" />
        <Caret />
        <Caret bar />
      </div>
    </aside>
  )
}

interface TreeRow {
  label: string
  icon: string
  toggle?: string
  child?: boolean
  checked?: boolean
  bold?: boolean
}

const tree: TreeRow[] = [
  { label: '历史记录模式', icon: 'clock' },
  { label: '模型视图', icon: 'viewCube', toggle: '+' },
  { label: '摄像机', icon: 'camera', toggle: '+', checked: true },
  { label: '模型历史记录', icon: 'folder', toggle: '−' },
  { label: '基准坐标系 (0)', icon: 'csys', child: true },
  { label: '块 (1)', icon: 'cube', child: true },
  { label: '抽壳 (2)', icon: 'shell', child: true },
  { label: '修剪体 (3)', icon: 'bars', child: true, bold: true },
]

const emptyRows = Array.from({ length: 11 }, (_, i) => i)

function TreeCell({ row }: { row: TreeRow }) {
  return (
    <div
      className={clsx(
        'flex h-[14px] items-center whitespace-nowrap',
        row.child ? 'pl-[20px]' : 'pl-1',
        row.bold && 'font-bold',
      )}
    >
      {row.child ? (
        <label className="flex items-center">
          <span className="mr-[1px] w-[8px] border-t border-dotted border-[#bbb]" />
          <span className="relative flex size-[10px]">
            <input
              type="checkbox"
              defaultChecked
              className="size-[10px] appearance-none border border-[#222] bg-white"
            />
            <Icon name="check" className="pointer-events-none absolute left-px top-px size-[8px]" />
          </span>
          <Icon name={row.icon} className="mx-[1px] size-3" />
          {row.label}
        </label>
      ) : (
        <>
          {row.toggle ? (
            <button type="button" className="w-[7px] text-[9px] leading-[9px]">
              {row.toggle}
            </button>
          ) : (
            <span className="w-[7px] border-t border-dotted border-[#bbb]" />
          )}
          <span className="w-[3px]" />
          {row.checked && <Icon name="check" className="mr-[2px] size-[10px]" />}
          <Icon name={row.icon} className="mr-[2px] size-3" />
          {row.label}
        </>
      )}
    </div>
  )
}

const sections = ['相依性', '细节', '预览']

function PartNavigator() {
  return (
    <section className="flex w-[240px] shrink-0 flex-col bg-white px-1">
      <div className="flex h-[21px] shrink-0 items-center justify-between pl-[3px] pr-1 pt-1 text-[9px]">
        <h2>部件导航器</h2>
        <button type="button" aria-label="最大化" className="h-[8px] w-[9px] border border-t-2 border-[#222]" />
      </div>
      <div className="min-h-0 flex-1 overflow-hidden border border-[#e4e4e4]">
        <table className="w-full table-fixed border-collapse text-[9px] leading-[14px]">
          <thead className="bg-[#efefef]">
            <tr className="h-[14px] text-left">
              <th className="border-r border-[#d4d4d4] pl-1 font-normal">
                <span className="flex items-center gap-3">
                  名称
                  <Caret className="rotate-180 scale-125" />
                </span>
              </th>
              <th className="w-[72px] border-r border-[#d4d4d4] pl-1 font-normal">最新</th>
              <th className="w-[11px] whitespace-nowrap pl-px font-normal">附</th>
            </tr>
          </thead>
          <tbody>
            {tree.map((row) => (
              <tr key={row.label} className="h-[15px] border-b border-[#ececec] even:bg-[#f7f7f7]">
                <td className="border-r border-[#ececec]">
                  <TreeCell row={row} />
                </td>
                <td className="border-r border-[#ececec] pl-1">
                  {row.child && <Icon name="check" className="size-[10px]" />}
                </td>
                <td />
              </tr>
            ))}
            {emptyRows.map((i) => (
              <tr key={i} className="h-[15px] border-b border-[#ececec] even:bg-[#f7f7f7]">
                <td className="border-r border-[#ececec]" />
                <td className="border-r border-[#ececec]" />
                <td />
              </tr>
            ))}
          </tbody>
        </table>
      </div>
      <div className="flex h-3 shrink-0 items-center bg-[#f0f0f0] px-1">
        <Caret className="rotate-90" />
        <div className="ml-[6px] flex h-[11px] w-[157px] items-center justify-center gap-px rounded-sm border border-[#a5a5a5] bg-linear-to-b from-[#f4f4f4] to-[#d2d2d2]">
          <span className="h-1 w-px bg-[#555]" />
          <span className="h-1 w-px bg-[#555]" />
          <span className="h-1 w-px bg-[#555]" />
        </div>
        <Caret className="ml-auto -rotate-90" />
      </div>
      <div className="mt-[2px] h-1 shrink-0 border border-[#b8b8b8] bg-[#d0d0d0]" />
      {sections.map((section) => (
        <button
          key={section}
          type="button"
          className="flex h-[18px] shrink-0 items-center justify-between border-b border-[#b4b4b4] pl-[5px] pr-1 text-[10px] text-[#3f8fc0]"
        >
          {section}
          <Icon name="chevron" className="size-[9px]" />
        </button>
      ))}
      <div className="h-1 shrink-0" />
    </section>
  )
}

function Viewport() {
  return (
    <main className="relative min-w-0 flex-1 border-l-2 border-[#a4a8aa] bg-linear-to-b from-[#b3b6b7] to-[#e6e9ec] to-85%">
      <svg
        viewBox="266 131 734 385"
        preserveAspectRatio="xMidYMid slice"
        className="absolute inset-0 h-full w-full"
      >
        <g stroke="#4a3a18" strokeWidth="1" strokeLinejoin="round">
          <path d="M590 148 L736 111 L685 334 L540 371 Z" fill="#ffb700" />
          <path d="M736 111 L785 240 L735 464 L685 334 Z" fill="#ff9500" />
          <path d="M540 371 L685 334 L735 464 L590 501 Z" fill="#a46200" />
        </g>
        <g fill="none" stroke="#4a42e0" strokeWidth="0.9">
          <path d="M479 273 L525 261 L541 302 L495 314 Z" />
          <path d="M479 273 L473 297 L490 338 L495 314" />
          <path d="M490 338 L536 326 L541 302" />
          <path d="M479 273 L464 235 M490 338 L486 355 M541 302 L556 298" />
        </g>
        <path d="M556 298 L588 291" stroke="#d8d0c0" />
        <path d="M573 292 L586 291 L575 296 Z" fill="#fff6e0" />
        <path d="M463 233 L469 241 L465 243 Z M483 354 L488 355 L485 362 Z" fill="#1818b8" stroke="#1818b8" />
        <g fontFamily="Liberation Sans, sans-serif" fontSize="9" fill="#3030d8">
          <text x="459" y="232">
            Z
          </text>
          <text x="481" y="368">
            X
          </text>
          <text x="588" y="294" fill="#fbe6b8">
            Y
          </text>
        </g>
        <path
          d="M297 468 L308 465 L313 470 V482 L300 486 L295 479 Z M297 468 L301 474 L313 470 M301 474 L300 486"
          fill="#d7dadb"
          stroke="#b0b2b2"
        />
        <path d="M299 478 L293 463" stroke="#2030c8" />
        <path d="M292 461 L297 467 L294 469 Z" fill="#1a28b8" />
        <path d="M299 478 L320 475" stroke="#6aa878" />
        <path d="M313 474 L322 475 L314 478 Z" fill="#2c9040" />
        <path d="M299 478 L298 489" stroke="#d04040" />
        <path d="M296 485 L301 486 L298 491 Z" fill="#d02828" />
        <g fontFamily="Liberation Sans, sans-serif" fontSize="8">
          <text x="289" y="461" fill="#3038c8">
            Z
          </text>
          <text x="322" y="477" fill="#408c50">
            Y
          </text>
          <text x="294" y="496" fill="#d04040">
            X
          </text>
        </g>
        <path d="M767 459 L775 458" stroke="#c4b8cc" />
      </svg>
      <div className="absolute right-0 top-[70px] flex h-[44px] w-[8px] items-end rounded-l-sm border border-r-0 border-[#4c5568] bg-[#39414f] p-px">
        <div className="ml-[2px] h-[28px] w-[4px] bg-linear-to-b from-[#b4b45c] to-[#3cae94]" />
      </div>
    </main>
  )
}

function Taskbar() {
  return (
    <footer className="h-[7px] shrink-0 border-t border-[#6c7c8c] bg-[#a3bedc]">
      <svg viewBox="0 0 1000 6" preserveAspectRatio="none" className="block h-full w-full">
        <path d="M0 0 H88 V6 H0 Z" fill="#8a9cb0" />
        <ellipse cx="20" cy="7" rx="12" ry="5" fill="#c4ccd4" />
        <path d="M60 6 C62 2 76 1 79 6" fill="#a8a888" />
        <path
          d="M89 0 H132 V6 H89 Z M180 0 H222 V6 H180 Z M316 0 H359 V6 H316 Z M362 0 H404 V6 H362 Z M407 0 H450 V6 H407 Z"
          fill="#d6e2ee"
          stroke="#5c6c7c"
        />
        <path d="M98 3 H122 V6 H98 Z" fill="#c6cc84" />
        <ellipse cx="201" cy="7" rx="10" ry="5" fill="#2f86e0" />
        <path d="M240 3 H254 V6 H240 Z" fill="#ecd9a4" />
        <path d="M281 3 H303 V6 H281 Z" fill="#34b4ec" />
        <path d="M328 3 L338 3 L342 6 H328 Z" fill="#c8284c" />
        <path d="M371 3 H382 V6 H371 Z" fill="#ecc828" />
        <path d="M382 3 H394 V6 H382 Z" fill="#84d048" />
        <path d="M434 6 L436 3 H439 V6 Z" fill="#c89c64" />
        <path d="M690 0 H765 L778 6 H680 Z" fill="#7f95b0" />
        <path d="M765 0 H779 V6 Z" fill="#eef3f8" />
        <path d="M780 0 H850 L820 6 H780 Z" fill="#dde7f1" />
        <path d="M790 3 H800 V6 H788 Z" fill="#ecc828" />
        <path d="M800 3 H812 L806 6 H800 Z" fill="#84d048" />
        <path d="M848 0 H898 L904 6 H806 Z" fill="#7f95b0" />
        <path d="M968 0 H988 V6 H968 Z" fill="#7f95b0" />
        <path d="M990 0 H1000 V6 H990 Z" fill="#4e5664" />
      </svg>
    </footer>
  )
}

export default function App() {
  return (
    <div className={clsx('flex h-screen flex-col overflow-hidden bg-white text-[#222]', FONT)}>
      <TitleBar />
      <TabBar />
      <Ribbon />
      <SelectionBar />
      <div className="flex min-h-0 flex-1">
        <ResourceBar />
        <PartNavigator />
        <Viewport />
      </div>
      <div className="flex h-4 shrink-0 items-center border-t border-[#c8c8c8] bg-white pl-[2px] text-[8px] font-bold text-[#222]">
        选择对象并使用 MB3，或者双击某一对象
      </div>
      <Taskbar />
    </div>
  )
}
